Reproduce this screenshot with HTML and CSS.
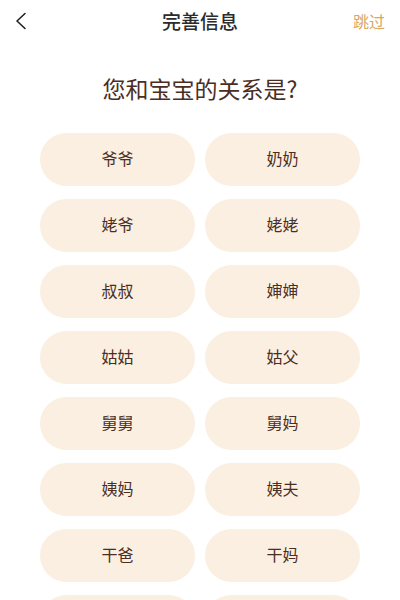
FILE: index.html
```html
<!DOCTYPE html>
<html lang="zh">
<head>
<meta charset="utf-8">
<link rel="stylesheet" href="styles.css">
</head>
<body>
<div class="page">
  <header class="nav">
    <span class="back">
      <svg width="12" height="18" viewBox="0 0 12 18"><polyline points="10,1.5 2,9 10,16.5" fill="none" stroke="#222" stroke-width="1.6" stroke-linecap="round" stroke-linejoin="round"/></svg>
    </span>
    <h1 class="nav-title">完善信息</h1>
    <span class="skip">跳过</span>
  </header>
  <h2 class="question">您和宝宝的关系是?</h2>
  <div class="grid">
    <div class="opt">爷爷</div><div class="opt">奶奶</div>
    <div class="opt">姥爷</div><div class="opt">姥姥</div>
    <div class="opt">叔叔</div><div class="opt">婶婶</div>
    <div class="opt">姑姑</div><div class="opt">姑父</div>
    <div class="opt">舅舅</div><div class="opt">舅妈</div>
    <div class="opt">姨妈</div><div class="opt">姨夫</div>
    <div class="opt">干爸</div><div class="opt">干妈</div>
    <div class="opt"></div><div class="opt"></div>
  </div>
</div>
</body>
</html>
```
FILE: styles.css
```css
* { box-sizing: border-box; }
html, body { margin: 0; padding: 0; background: #fff; }
body {
  font-family: "Noto Sans CJK SC", "Noto Sans", sans-serif;
  width: 400px;
  height: 600px;
  overflow: hidden;
}
.page { width: 400px; }
.nav {
  height: 41px;
  display: flex;
  align-items: center;
  justify-content: space-between;
  padding: 0 15px 0 15px;
  position: relative;
}
.back { display: flex; align-items: center; width: 40px; padding-top: 1px; }
.nav-title {
  margin: 0;
  font-size: 19px;
  font-weight: 500;
  color: #2b2b2b;
  position: absolute;
  left: 0; right: 0;
  text-align: center;
  pointer-events: none;
}
.skip { font-size: 16px; color: #d9a764; }
.question {
  margin: 23px 0 0;
  text-align: center;
  font-size: 23px;
  font-weight: 400;
  color: #4b2e1f;
  line-height: 48px;
}
.grid {
  margin: 21px 40px 0;
  display: grid;
  grid-template-columns: 155px 155px;
  column-gap: 10px;
  row-gap: 13px;
}
.opt {
  height: 53px;
  border-radius: 27px;
  background: #faefe1;
  display: flex;
  align-items: center;
  justify-content: center;
  font-size: 16px;
  color: #4b2e1f;
  padding-bottom: 3px;
}
```
